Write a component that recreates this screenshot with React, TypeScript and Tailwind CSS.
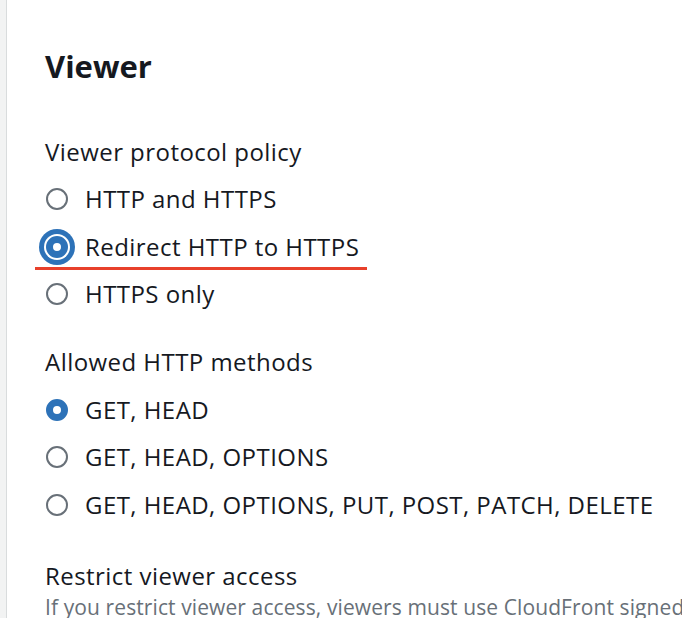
import React from 'react';

type Option = { label: string; checked?: boolean; focused?: boolean; marked?: boolean };

const protocolOptions: Option[] = [
  { label: 'HTTP and HTTPS' },
  { label: 'Redirect HTTP to HTTPS', checked: true, focused: true, marked: true },
  { label: 'HTTPS only' },
];

const methodOptions: Option[] = [
  { label: 'GET, HEAD', checked: true },
  { label: 'GET, HEAD, OPTIONS' },
  { label: 'GET, HEAD, OPTIONS, PUT, POST, PATCH, DELETE' },
];

function Radio({ checked, focused }: { checked?: boolean; focused?: boolean }) {
  if (checked) {
    return (
      <span
        className={
          'block w-[22px] h-[22px] shrink-0 rounded-full border-[7px] border-[#2d72b8] bg-white ' +
          (focused ? 'ring-[5px] ring-[#2d72b8] ring-offset-[2px] ring-offset-white' : '')
        }
      />
    );
  }
  return <span className="block w-[22px] h-[22px] shrink-0 rounded-full border-2 border-[#687078] bg-white" />;
}

function RadioGroup({ title, options }: { title: string; options: Option[] }) {
  return (
    <div>
      <div className="h-[47.5px] flex items-center">{title}</div>
      {options.map((opt) => (
        <div key={opt.label} className="relative h-[47.5px] flex items-center gap-[17px] pl-px">
          <Radio checked={opt.checked} focused={opt.focused} />
          <span>{opt.label}</span>
          {/* annotation underline */}
          {opt.marked && <span className="absolute left-[-10px] bottom-px w-[332px] h-[3px] bg-[#e8402b]" />}
        </div>
      ))}
    </div>
  );
}

export default function App() {
  return (
    <div
      className="h-[618px] w-[682px] overflow-hidden bg-white flex text-[#16191f] text-[24px] tracking-[0.45px]"
      style={{ fontFamily: '"Open Sans", "Noto Sans", sans-serif' }}
    >
      <div className="w-[7px] shrink-0 bg-[#f2f3f3] border-r border-[#d9dcdd]" />
      <main className="flex-1 pl-[38px] pt-[46px] min-w-0">
        <h2 className="h-[40px] flex items-center text-[31px] font-bold tracking-normal">Viewer</h2>

        <div className="mt-[42px]">
          <RadioGroup title="Viewer protocol policy" options={protocolOptions} />
        </div>

        <div className="mt-[20.5px]">
          <RadioGroup title="Allowed HTTP methods" options={methodOptions} />
        </div>

        <div className="mt-[31px]">
          <div className="h-[32px] flex items-center">Restrict viewer access</div>
          <p className="h-[32px] flex items-center whitespace-nowrap text-[21px] tracking-[0.1px] text-[#687078]">
            If you restrict viewer access, viewers must use CloudFront signed URLs or signed cookies to access your content.
          </p>
        </div>
      </main>
    </div>
  );
}
